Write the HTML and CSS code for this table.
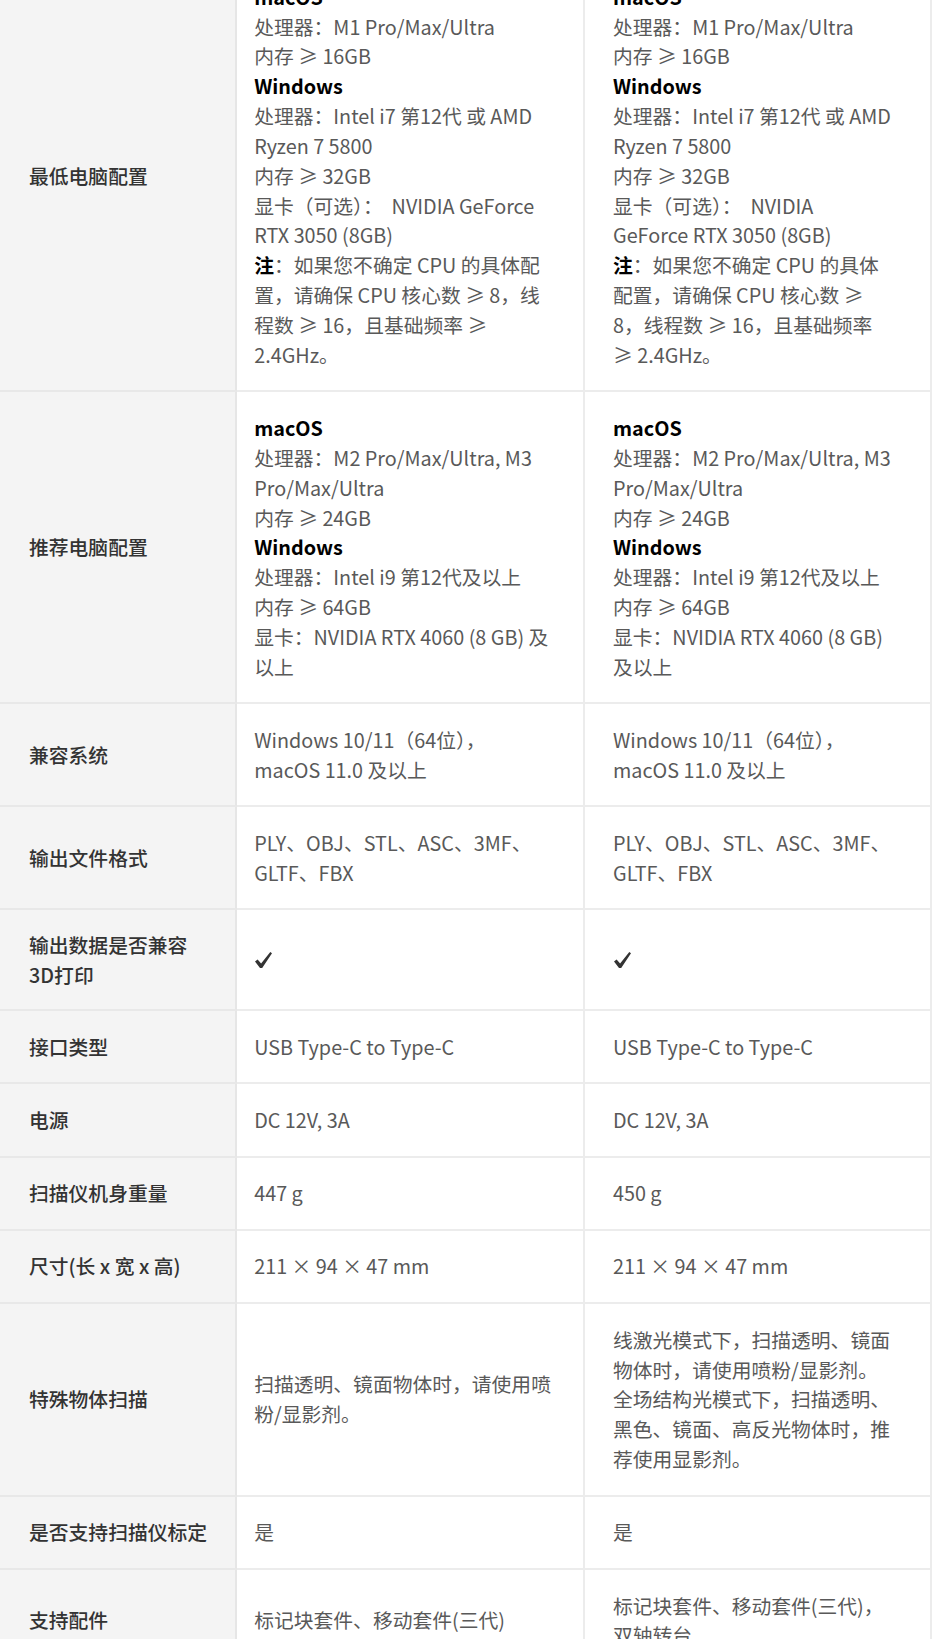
FILE: index.html
```html
<!DOCTYPE html>
<html lang="zh-CN">
<head>
<meta charset="utf-8">
<title>规格对比</title>
<link rel="stylesheet" href="styles.css">
</head>
<body>
<div class="spec">
  <div class="row">
    <div class="label">最低电脑配置</div>
    <div class="val v1"><div><b>macOS</b><br>处理器：M1 Pro/Max/Ultra<br>内存 ≥ 16GB<br><b>Windows</b><br>处理器：Intel i7 第12代 或 AMD Ryzen 7 5800<br>内存 ≥ 32GB<br>显卡（可选）：&#160; NVIDIA GeForce RTX 3050 (8GB)<br><b>注</b>：如果您不确定 CPU 的具体配置，请确保 CPU 核心数 ≥ 8，线程数 ≥ 16，且基础频率 ≥ 2.4GHz。</div></div>
    <div class="val v2"><div><b>macOS</b><br>处理器：M1 Pro/Max/Ultra<br>内存 ≥ 16GB<br><b>Windows</b><br>处理器：Intel i7 第12代 或 AMD Ryzen 7 5800<br>内存 ≥ 32GB<br>显卡（可选）：&#160; NVIDIA GeForce RTX 3050 (8GB)<br><b>注</b>：如果您不确定 CPU 的具体配置，请确保 CPU 核心数 ≥ 8，线程数 ≥ 16，且基础频率 ≥ 2.4GHz。</div></div>
  </div>
  <div class="row">
    <div class="label">推荐电脑配置</div>
    <div class="val v1"><div><b>macOS</b><br>处理器：M2 Pro/Max/Ultra, M3 Pro/Max/Ultra<br>内存 ≥ 24GB<br><b>Windows</b><br>处理器：Intel i9 第12代及以上<br>内存 ≥ 64GB<br>显卡：NVIDIA RTX 4060 (8 GB) 及以上</div></div>
    <div class="val v2"><div><b>macOS</b><br>处理器：M2 Pro/Max/Ultra, M3 Pro/Max/Ultra<br>内存 ≥ 24GB<br><b>Windows</b><br>处理器：Intel i9 第12代及以上<br>内存 ≥ 64GB<br>显卡：NVIDIA RTX 4060 (8 GB) 及以上</div></div>
  </div>
  <div class="row">
    <div class="label">兼容系统</div>
    <div class="val v1"><div>Windows 10/11（64位），<br>macOS 11.0 及以上</div></div>
    <div class="val v2"><div>Windows 10/11（64位），<br>macOS 11.0 及以上</div></div>
  </div>
  <div class="row">
    <div class="label">输出文件格式</div>
    <div class="val v1"><div>PLY、OBJ、STL、ASC、3MF、GLTF、FBX</div></div>
    <div class="val v2"><div>PLY、OBJ、STL、ASC、3MF、GLTF、FBX</div></div>
  </div>
  <div class="row">
    <div class="label">输出数据是否兼容3D打印</div>
    <div class="val v1"><svg class="check" viewBox="0 0 17 16" width="17" height="16" role="img" aria-label="支持"><path d="M0 9.4 L2.6 7.4 L6.1 11.6 L15.3 0 L17 1.3 L7.2 16 L5 16 Z"/></svg></div>
    <div class="val v2"><svg class="check" viewBox="0 0 17 16" width="17" height="16" role="img" aria-label="支持"><path d="M0 9.4 L2.6 7.4 L6.1 11.6 L15.3 0 L17 1.3 L7.2 16 L5 16 Z"/></svg></div>
  </div>
  <div class="row">
    <div class="label">接口类型</div>
    <div class="val v1"><div>USB Type-C to Type-C</div></div>
    <div class="val v2"><div>USB Type-C to Type-C</div></div>
  </div>
  <div class="row">
    <div class="label">电源</div>
    <div class="val v1"><div>DC 12V, 3A</div></div>
    <div class="val v2"><div>DC 12V, 3A</div></div>
  </div>
  <div class="row">
    <div class="label">扫描仪机身重量</div>
    <div class="val v1"><div>447 g</div></div>
    <div class="val v2"><div>450 g</div></div>
  </div>
  <div class="row">
    <div class="label">尺寸(长 x 宽 x 高)</div>
    <div class="val v1"><div>211 × 94 × 47 mm</div></div>
    <div class="val v2"><div>211 × 94 × 47 mm</div></div>
  </div>
  <div class="row">
    <div class="label">特殊物体扫描</div>
    <div class="val v1"><div>扫描透明、镜面物体时，请使用喷粉/显影剂。</div></div>
    <div class="val v2"><div>线激光模式下，扫描透明、镜面物体时，请使用喷粉/显影剂。<br>全场结构光模式下，扫描透明、黑色、镜面、高反光物体时，推荐使用显影剂。</div></div>
  </div>
  <div class="row">
    <div class="label">是否支持扫描仪标定</div>
    <div class="val v1"><div>是</div></div>
    <div class="val v2"><div>是</div></div>
  </div>
  <div class="row">
    <div class="label">支持配件</div>
    <div class="val v1"><div>标记块套件、移动套件(三代)</div></div>
    <div class="val v2"><div>标记块套件、移动套件(三代)，双轴转台</div></div>
  </div>
</div>
</body>
</html>
```
FILE: styles.css
```css
html, body {
  margin: 0;
  padding: 0;
  background: #ffffff;
}
body {
  overflow: hidden;
  font-family: "Noto Sans CJK SC", "Noto Sans", sans-serif;
  font-size: 19.8px;
  line-height: 29.85px;
  color: #595959;
}
.spec {
  width: 932px;
  margin-top: -39px;
}
.row {
  display: grid;
  grid-template-columns: 237px 348px 347px;
}
.row > div {
  display: flex;
  align-items: center;
  border-bottom: 2px solid #ececec;
  border-right: 2px solid #ececec;
}
.label {
  background: #f4f4f4;
  padding: 19.5px 27px 19.5px 29px;
  font-weight: 500;
  color: #333333;
  border-right-color: #e6e6e6 !important;
  border-bottom-color: #e8e8e8 !important;
}
.v1 {
  padding: 20.7px 28px 20.7px 17.2px;
}
.v2 {
  padding: 20.7px 38px 20.7px 28px;
}
.val b {
  font-weight: 700;
  color: #000000;
}
.check {
  display: block;
  margin-left: 1px;
  fill: #333333;
}
```
